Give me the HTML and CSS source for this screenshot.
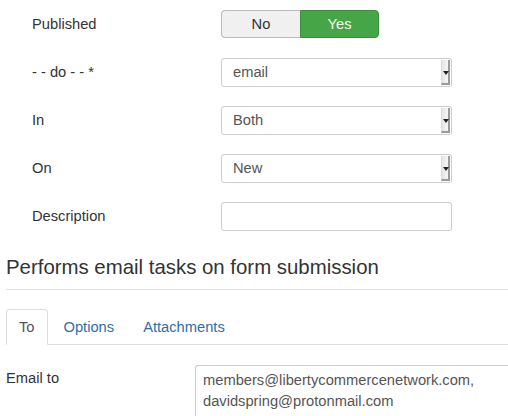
FILE: index.html
```html
<!DOCTYPE html>
<html>
<head>
<meta charset="utf-8">
<link rel="stylesheet" href="styles.css">
</head>
<body>
<div class="page">
  <div class="fields">
    <div class="row">
      <div class="label">Published</div>
      <div class="toggle">
        <span class="opt no">No</span>
        <span class="opt yes">Yes</span>
      </div>
    </div>
    <div class="row">
      <div class="label">- - do - - *</div>
      <div class="select"><span class="val">email</span><span class="arrow"></span></div>
    </div>
    <div class="row">
      <div class="label">In</div>
      <div class="select"><span class="val">Both</span><span class="arrow"></span></div>
    </div>
    <div class="row">
      <div class="label">On</div>
      <div class="select"><span class="val">New</span><span class="arrow"></span></div>
    </div>
    <div class="row">
      <div class="label">Description</div>
      <div class="input"></div>
    </div>
  </div>
  <h2 class="title">Performs email tasks on form submission</h2>
  <ul class="tabs">
    <li class="tab active">To</li>
    <li class="tab">Options</li>
    <li class="tab">Attachments</li>
  </ul>
  <div class="email-row">
    <div class="elabel">Email to</div>
    <div class="textarea">members@libertycommercenetwork.com,<br>davidspring@protonmail.com</div>
  </div>
</div>
</body>
</html>
```

FILE: styles.css
```css
html, body {
  margin: 0;
  padding: 0;
  background: #fff;
  overflow: hidden;
}
body {
  font-family: "Liberation Sans", Arial, sans-serif;
  font-size: 14.7px;
  color: #333;
}
.page {
  padding-left: 6px;
}
.fields {
  padding: 10px 0 0 26px;
}
.row {
  display: flex;
  align-items: center;
  height: 28px;
  margin-bottom: 20px;
}
.label {
  width: 189px;
  color: #333;
}
.toggle {
  display: flex;
  height: 28px;
}
.opt {
  display: flex;
  align-items: center;
  justify-content: center;
  width: 79px;
  box-sizing: border-box;
}
.no {
  background: #f0f0f0;
  border: 1px solid #bbb;
  border-right: none;
  border-radius: 4px 0 0 4px;
  color: #333;
}
.yes {
  background: #46a546;
  border: 1px solid #3b8f3b;
  border-radius: 0 4px 4px 0;
  color: #f4fff0;
}
.select {
  width: 231px;
  height: 29px;
  box-sizing: border-box;
  border: 1px solid #ccc;
  border-radius: 3px;
  display: flex;
  align-items: center;
  color: #555;
}
.val {
  padding-left: 11px;
  flex: 1;
}
.arrow {
  width: 9px;
  height: 25px;
  margin-right: 1px;
  background: linear-gradient(to right, #e4e4e4, #f6f6f6);
  border-left: 1px solid #ddd;
  border-right: 2px solid #999;
  border-bottom: 2px solid #999;
  box-sizing: border-box;
  position: relative;
}
.arrow::after {
  content: "";
  position: absolute;
  left: 1px;
  top: 11px;
  border-left: 3px solid transparent;
  border-right: 3px solid transparent;
  border-top: 4px solid #222;
}
.input {
  width: 231px;
  height: 29px;
  box-sizing: border-box;
  border: 1px solid #ccc;
  border-radius: 3px;
}
.title {
  margin: 0;
  padding-top: 3px;
  font-size: 20.4px;
  font-weight: normal;
  color: #333;
  line-height: 28px;
  padding-bottom: 8px;
  border-bottom: 1px solid #e2e2e2;
}
.tabs {
  list-style: none;
  margin: 19px 0 0 0;
  padding: 0;
  display: flex;
  border-bottom: 1px solid #ddd;
}
.tab {
  padding: 8px 12px 8px;
  margin-right: 3px;
  margin-bottom: -1px;
  line-height: 18px;
  color: #2f6fa7;
  border: 1px solid transparent;
  border-radius: 4px 4px 0 0;
}
.tab.active {
  color: #555;
  background: #fff;
  border-color: #ddd #ddd transparent #ddd;
}
.email-row {
  display: flex;
  margin-top: 20px;
}
.elabel {
  width: 189px;
  padding-top: 5px;
  color: #333;
}
.textarea {
  flex: 1;
  height: 60px;
  border: 1px solid #ccc;
  border-right: none;
  border-radius: 3px 0 0 3px;
  padding: 4px 7px;
  line-height: 21px;
  color: #555;
  white-space: nowrap;
}
```
